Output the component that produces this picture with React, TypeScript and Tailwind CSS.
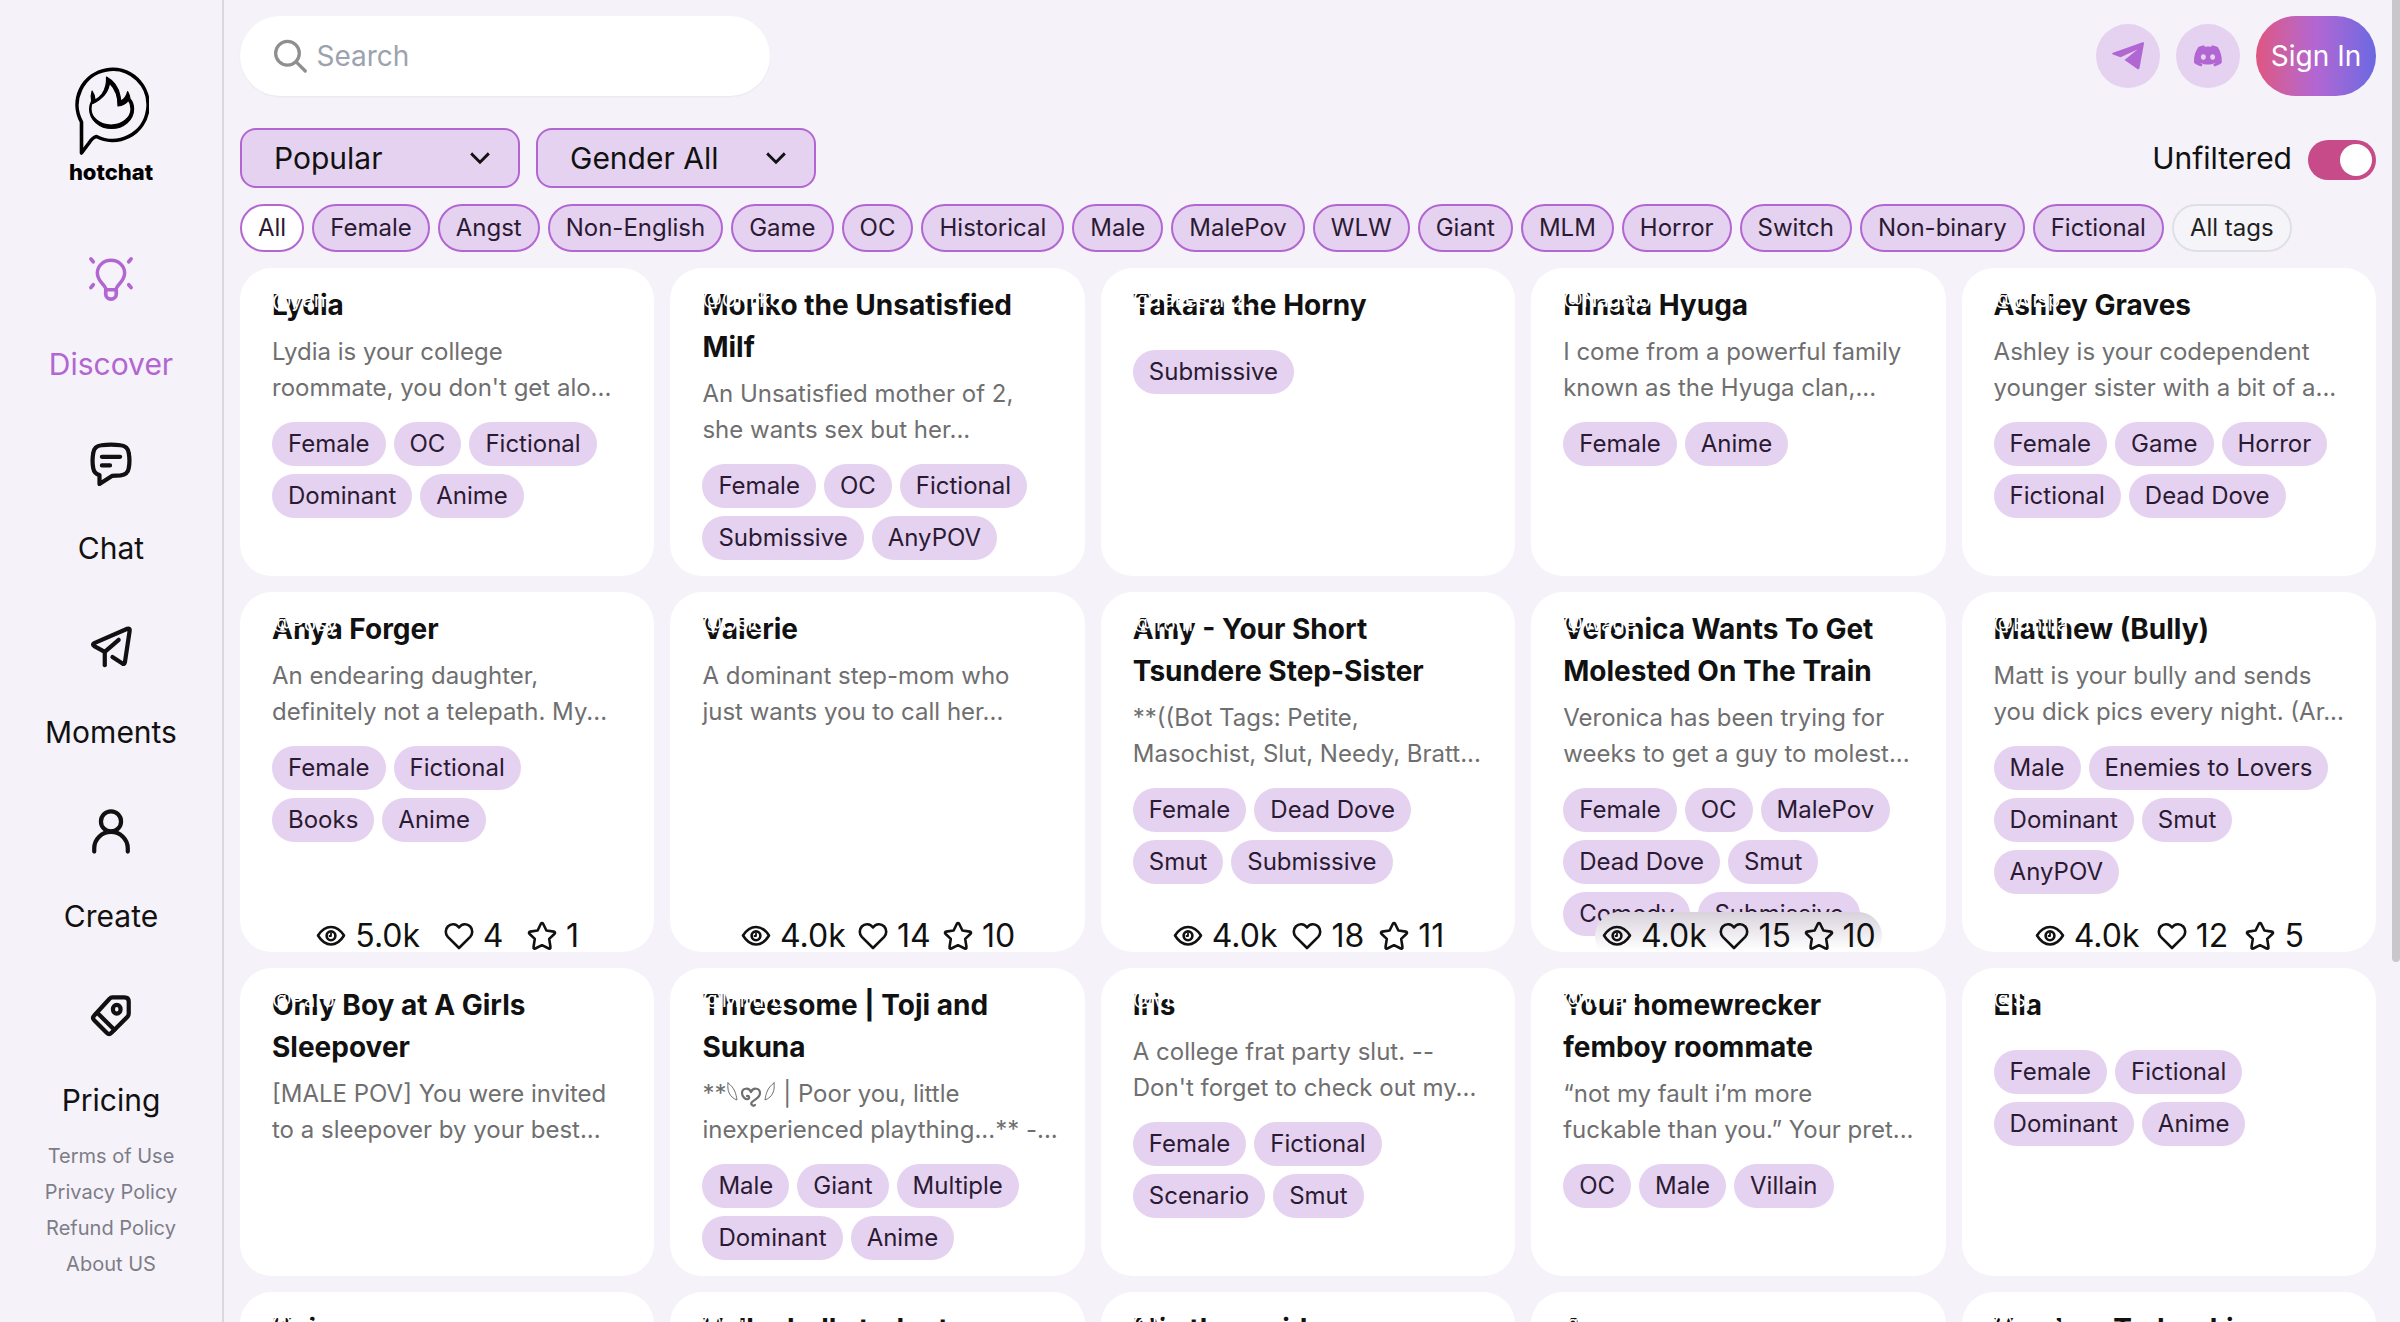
import React from "react";

type IconProps = { className?: string };

const stroke = {
  fill: "none",
  stroke: "currentColor",
  strokeLinecap: "round" as const,
  strokeLinejoin: "round" as const,
};

const Bulb = ({ className }: IconProps) => (
  <svg viewBox="0 0 48 48" className={className} {...stroke} strokeWidth={3.8} aria-hidden="true">
    <path d="M18.5 35c0-5.200-9.500-8.500-9.500-18a15 13.500 0 0 1 30 0c0 9.500-9.500 12.800-9.500 18z" transform="translate(1.200 1) scale(.95 .98)" />
    <path d="M18.500 35.500v4.500a5.500 5 0 0 0 11 0v-4.500" />
    <path d="M3 3l2.500 3M45 3l-2.500 3M3 33l2.500-3M45 33l-2.500-3" />
  </svg>
);
const Chat = ({ className }: IconProps) => (
  <svg viewBox="0 0 48 48" className={className} {...stroke} strokeWidth={4.4} aria-hidden="true">
    <path d="M14 5.500Q24 4 34 5.500q7.500.8 8.500 8Q44 22 42.500 29.500q-1 6.500-8.500 7.500l-9 .5-13 8.500v-9.500Q6.500 35 5.500 29.500 4 22 5.500 13.500q1-7.200 8.500-8z" />
    <path d="M14.500 17.500h19M14.500 26.500h8.500" />
  </svg>
);
const Plane = ({ className }: IconProps) => (
  <svg viewBox="0 0 48 48" className={className} {...stroke} strokeWidth={4.4} aria-hidden="true">
    <path d="M32 16.500L17.500 29 6.500 23Q4 21.300 6.500 20L41 5q3-1 2.500 2L38.500 40q-.5 2.500-2.500 1.300L25.500 34.500" />
    <path d="M17.500 29v14" />
  </svg>
);
const Person = ({ className }: IconProps) => (
  <svg viewBox="0 0 48 48" className={className} {...stroke} strokeWidth={4.4} aria-hidden="true">
    <circle cx="24" cy="14" r="10.500" />
    <path d="M6.500 45.500V42a17.500 17 0 0 1 35 0v3.500" />
  </svg>
);
const Tag = ({ className }: IconProps) => (
  <svg viewBox="0 0 48 48" className={className} {...stroke} strokeWidth={4.4} aria-hidden="true">
    <path d="M25.500 5.500H38q4.500 0 4.500 4.500v12.500q0 2-1.500 3.500L24.500 42.500q-2.500 2.500-5 0L6.500 29.500q-2.500-2.500 0-5L22.500 7q1.200-1.500 3-1.500z" />
    <path d="M11.500 23.500L27.500 39.500" />
    <ellipse cx="30" cy="18" rx="4" ry="4.500" />
  </svg>
);
const Eye = () => (
  <svg viewBox="0 0 32 32" className="size-8" {...stroke} strokeWidth={2.600} aria-hidden="true">
    <path d="M3 15.500Q8.500 7 16 7T29 15.500Q23.500 24.500 16 24.500T3 15.500z" />
    <circle cx="16" cy="15.800" r="4.400" />
    <path d="M16 13.500v2.500h-1.500" strokeWidth={1.800} />
  </svg>
);
const Heart = () => (
  <svg viewBox="0 0 32 32" className="size-8" {...stroke} strokeWidth={2.600} aria-hidden="true">
    <path d="M16 28L4.800 16.800a7.600 7.600 0 0 1 0-10.300C8 3.200 13 3.500 16 7.500c3-4 8-4.300 11.200-1a7.600 7.600 0 0 1 0 10.300z" />
  </svg>
);
const Star = () => (
  <svg viewBox="0 0 32 32" className="size-8" {...stroke} strokeWidth={2.600} aria-hidden="true">
    <path d="M14.900 3.700a1.300 1.300 0 0 1 2.200 0l3.300 6.800 7.500 1.100a1.200 1.200 0 0 1 .7 2.100l-5.400 5.200 1.300 8.300a1.200 1.200 0 0 1-1.800 1.300L16 25.200l-6.700 3.300a1.200 1.200 0 0 1-1.800-1.300l1.300-8.300-5.400-5.200a1.200 1.200 0 0 1 .7-2.100l7.500-1.100z" />
  </svg>
);
const Chevron = () => (
  <svg viewBox="0 0 20 20" className="pointer-events-none absolute top-1/2 right-7 size-6 -translate-y-1/2" {...stroke} strokeWidth={2.400} strokeLinecap="square" strokeLinejoin="miter" aria-hidden="true">
    <path d="M3.500 7l6.500 6.500L16.500 7" />
  </svg>
);
const WingedHeart = () => (
  <svg viewBox="0 0 50 28" className="inline-block h-7 w-[50px] align-middle" {...stroke} strokeWidth={1.500} aria-hidden="true">
    <path d="M2 2c-1 7 1 14 9 17-1-6-2-12-9-17zM48 2c1 7-1 14-9 17 1-6 2-12 9-17z" strokeWidth={1} />
    <path d="M25 11c-2-5-9-4-9 1 0 4 4 7 6 6s1-4-1-3M25 11c2-5 9-4 9 1 0 5-5 6-8 9-2 2 1 5 3 3" strokeWidth={2.200} />
  </svg>
);

const Logo = () => (
  <a href="#home" className="flex flex-col items-center text-black">
    <svg viewBox="0 0 76 92" className="h-[92px] w-[76px]" {...stroke} aria-hidden="true">
      <path d="M8.500 56A35.500 35.500 0 1 1 23.500 70.500Q20 71 16 77L8.500 87z" strokeWidth={3.600} />
      <path
        d="M33.500 11C41 15 45.500 22 47 30q.4 3 .8 5 5.500-3 6.800-9.500 2 3.500 2.500 7.500 3.500 4 3.500 10a22 19.500 0 0 1-44 0q0-4 2-8-1-5 .5-10 2.500 3.500 3 9 8.500-4 10.900-15 .7-4 .5-8zM36.500 17q-1.500 13-16.500 20.500l-.8-1q-1.200 3-1.200 6.500a20 16 0 0 0 40 0q0-5-2.500-8.500-4 5-10.500 5.500.5-14-8.500-23z"
        fill="currentColor"
        strokeWidth={1.200}
        fillRule="evenodd"
      />
    </svg>
    <span className="mt-0.5 text-[22px] leading-6 font-extrabold">hotchat</span>
  </a>
);

const nav = [
  { label: "Discover", Icon: Bulb, active: true },
  { label: "Chat", Icon: Chat },
  { label: "Moments", Icon: Plane },
  { label: "Create", Icon: Person },
  { label: "Pricing", Icon: Tag },
];

const filters = ["Female", "Angst", "Non-English", "Game", "OC", "Historical", "Male", "MalePov", "WLW", "Giant", "MLM", "Horror", "Switch", "Non-binary", "Fictional"];

type Card = {
  title: string[];
  author: string;
  lines?: React.ReactNode[];
  tags: string[];
  stats?: [string, string, string];
};

const cards: Card[] = [
  { title: ["Lydia"], author: "@yan", lines: ["Lydia is your college", "roommate, you don't get alo..."], tags: ["Female", "OC", "Fictional", "Dominant", "Anime"] },
  { title: ["Moriko the Unsatisfied", "Milf"], author: "@Omiko", lines: ["An Unsatisfied mother of 2,", "she wants sex but her..."], tags: ["Female", "OC", "Fictional", "Submissive", "AnyPOV"] },
  { title: ["Takara the Horny"], author: "@Takeshi12...", tags: ["Submissive"] },
  { title: ["Hinata Hyuga"], author: "@Nagato", lines: ["I come from a powerful family", "known as the Hyuga clan,..."], tags: ["Female", "Anime"] },
  { title: ["Ashley Graves"], author: "@Wisp", lines: ["Ashley is your codependent", "younger sister with a bit of a..."], tags: ["Female", "Game", "Horror", "Fictional", "Dead Dove"] },
  { title: ["Anya Forger"], author: "@Posy", lines: ["An endearing daughter,", "definitely not a telepath. My..."], tags: ["Female", "Fictional", "Books", "Anime"], stats: ["5.0k", "4", "1"] },
  { title: ["Valerie"], author: "@Oslo", lines: ["A dominant step-mom who", "just wants you to call her..."], tags: [], stats: ["4.0k", "14", "10"] },
  { title: ["Amy - Your Short", "Tsundere Step-Sister"], author: "@Tom", lines: ["**((Bot Tags: Petite,", "Masochist, Slut, Needy, Bratt..."], tags: ["Female", "Dead Dove", "Smut", "Submissive"], stats: ["4.0k", "18", "11"] },
  { title: ["Veronica Wants To Get", "Molested On The Train"], author: "@Wage", lines: ["Veronica has been trying for", "weeks to get a guy to molest..."], tags: ["Female", "OC", "MalePov", "Dead Dove", "Smut", "Comedy", "Submissive"], stats: ["4.0k", "15", "10"] },
  { title: ["Matthew (Bully)"], author: "@Emilia", lines: ["Matt is your bully and sends", "you dick pics every night. (Ar..."], tags: ["Male", "Enemies to Lovers", "Dominant", "Smut", "AnyPOV"], stats: ["4.0k", "12", "5"] },
  { title: ["Only Boy at A Girls", "Sleepover"], author: "@Parot", lines: ["[MALE POV] You were invited", "to a sleepover by your best..."], tags: [] },
  { title: ["Threesome | Toji and", "Sukuna"], author: "@Miruru", lines: [<>**<WingedHeart /> | Poor you, little</>, "inexperienced plaything...** -..."], tags: ["Male", "Giant", "Multiple", "Dominant", "Anime"] },
  { title: ["Iris"], author: "@Vi", lines: ["A college frat party slut. --", "Don't forget to check out my..."], tags: ["Female", "Fictional", "Scenario", "Smut"] },
  { title: ["Your homewrecker", "femboy roommate"], author: "@Wyatt", lines: ["“not my fault i’m more", "fuckable than you.” Your pret..."], tags: ["OC", "Male", "Villain"] },
  { title: ["Ella"], author: "@Sj", tags: ["Female", "Fictional", "Dominant", "Anime"] },
  { title: ["Kai"], author: "@Ro", tags: [] },
  { title: ["Volleyball student"], author: "@Mi", tags: [] },
  { title: ["Mia the maid"], author: "@Mi", tags: [] },
  { title: ["Amara"], author: "@Ame", tags: [] },
  { title: ["Yandere Todoroki"], author: "@Yuno", tags: [] },
];

const CharacterCard = ({ card }: { card: Card }) => (
  <article className="relative flex min-h-[308px] flex-col overflow-hidden rounded-[32px] bg-white px-8 py-4">
    <h2 className="text-[28px] leading-[42px] font-bold whitespace-nowrap text-[#111]">
      {card.title.map((t) => (
        <span key={t} className="block">{t}</span>
      ))}
    </h2>
    <span aria-hidden="true" className="absolute top-4 left-8 text-xl leading-8 text-white">{card.author}</span>
    <p className="mt-2 text-2xl leading-9 whitespace-nowrap text-[#6f6f70]">
      {card.lines?.map((l, i) => (
        <span key={i} className="block h-9">{l}</span>
      ))}
    </p>
    <ul className="mt-4 flex flex-wrap gap-2">
      {card.tags.map((t) => (
        <li key={t} className="rounded-full bg-[#e5d2f0] px-4 text-2xl leading-[44px] text-[#2b1a33]">{t}</li>
      ))}
    </ul>
    {card.stats && (
      <div className={`absolute inset-x-16 -bottom-2 flex h-12 items-center justify-around rounded-full text-[32px] leading-10 text-[#111] ${card.tags.length > 6 ? "bg-linear-to-b from-[#d9d2dc] to-white to-80%" : ""}`}>
        <span className="flex items-center"><Eye /><span className="pl-2">{card.stats[0]}</span></span>
        <span className="flex items-center"><Heart /><span className="pl-2">{card.stats[1]}</span></span>
        <span className="flex items-center"><Star /><span className="pl-2">{card.stats[2]}</span></span>
      </div>
    )}
  </article>
);

const Dropdown = ({ label, options }: { label: string; options: string[] }) => (
  <div className="relative w-[280px]">
    <select aria-label={label} className="h-[60px] w-full appearance-none rounded-2xl border-2 border-[#b266d2] bg-[#e5d2f0] px-8 text-[30px] leading-9 text-[#111]">
      {options.map((o) => (
        <option key={o}>{o}</option>
      ))}
    </select>
    <Chevron />
  </div>
);

export default function App() {
  return (
    <div className="flex h-screen overflow-hidden bg-[#f5f2f9] font-[Inter,sans-serif] text-[#111]">
      <aside className="flex w-56 shrink-0 flex-col items-center border-r-2 border-[#dad8df] pt-[66px]">
        <Logo />
        <nav className="mt-[72px] flex flex-col items-center gap-14">
          {nav.map(({ label, Icon, active }) => (
            <a key={label} href={`#${label.toLowerCase()}`} className={active ? "flex h-32 flex-col items-center justify-between text-[#b266d2]" : "flex h-32 flex-col items-center justify-between"}>
              <Icon className="size-[46px]" />
              <span className="text-[30px] leading-10">{label}</span>
            </a>
          ))}
        </nav>
        <div className="mt-[18px] flex flex-col items-center text-xl leading-9 text-[#7d7d88]">
          <a href="#terms">Terms of Use</a>
          <a href="#privacy">Privacy Policy</a>
          <a href="#refund">Refund Policy</a>
          <a href="#about">About US</a>
        </div>
      </aside>

      <main className="min-w-0 flex-1 pt-4 pr-4 pl-4">
        <header className="flex items-center justify-between">
          <label className="flex h-20 w-[530px] items-center gap-2 rounded-full bg-white pl-8 shadow-xs">
            <svg viewBox="0 0 40 40" className="size-10 text-[#8f8f8f]" {...stroke} strokeWidth={3.600} aria-hidden="true">
              <circle cx="17" cy="17" r="13" />
              <path d="M26.500 26.500l10 10" />
            </svg>
            <input aria-label="Search" placeholder="Search" className="w-full bg-transparent text-[28px] leading-9 outline-none placeholder:text-[#9ca3af]" />
          </label>
          <div className="flex items-center gap-4">
            <button aria-label="Telegram" className="flex size-16 items-center justify-center rounded-full bg-[#e5d2f0] text-[#b266d2]">
              <svg viewBox="0 0 32 28" className="h-7 w-8" fill="currentColor" aria-hidden="true">
                <path d="M30.500.3Q32.200-.2 32 1.500L27.500 26q-.5 2.200-2.500.8L12.500 18 25.500 7.500 8.500 15.300 1 12.500q-1.800-.9 0-1.800z" />
              </svg>
            </button>
            <button aria-label="Discord" className="flex size-16 items-center justify-center rounded-full bg-[#e5d2f0] text-[#b266d2]">
              <svg viewBox="0 0 24 24" className="size-7" fill="currentColor" aria-hidden="true">
                <path d="M20.317 4.370a19.800 19.800 0 0 0-4.885-1.515c-.21.375-.444.864-.608 1.250a18.270 18.270 0 0 0-5.648 0c-.164-.386-.398-.875-.608-1.250A19.700 19.700 0 0 0 3.683 4.370C.533 9.046-.32 13.580.1 18.058a19.900 19.900 0 0 0 6.050 3.030c.462-.63.874-1.295 1.226-1.994a13 13 0 0 1-1.872-.892l.372-.292c3.928 1.793 8.180 1.793 12.062 0l.373.292c-.598.35-1.220.645-1.873.892.36.698.772 1.362 1.225 1.993a19.800 19.800 0 0 0 6.052-3.030c.5-5.177-.838-9.674-3.398-13.687zM8.020 15.330c-1.183 0-2.157-1.085-2.157-2.419s.955-2.419 2.157-2.419c1.210 0 2.176 1.096 2.157 2.420 0 1.333-.956 2.418-2.157 2.418zm7.975 0c-1.183 0-2.157-1.085-2.157-2.419s.955-2.419 2.157-2.419c1.210 0 2.176 1.096 2.157 2.420 0 1.333-.946 2.418-2.157 2.418z" />
              </svg>
            </button>
            <button className="h-20 w-[120px] rounded-full bg-linear-to-r from-[#df5580] via-[#b266d2] to-[#6a68e2] text-center text-[28px] leading-9 whitespace-nowrap text-white">Sign In</button>
          </div>
        </header>

        <section className="mt-8 flex items-center justify-between">
          <div className="flex gap-4">
            <Dropdown label="Sort" options={["Popular", "Newest"]} />
            <Dropdown label="Gender" options={["Gender All", "Female", "Male"]} />
          </div>
          <label className="relative flex items-center gap-4 text-[30px] leading-9">
            Unfiltered
            <input type="checkbox" defaultChecked className="peer sr-only" />
            <span className="mt-1 flex h-10 w-[68px] items-center justify-end rounded-full bg-[#c74b88] px-1">
              <span className="size-8 rounded-full bg-white" />
            </span>
          </label>
        </section>

        <section aria-label="Tags" className="mt-4 flex gap-2 text-2xl leading-[44px] whitespace-nowrap text-[#2b1a33]">
          <button className="rounded-full border-2 border-[#b266d2] bg-white px-4">All</button>
          {filters.map((f) => (
            <button key={f} className="rounded-full border-2 border-[#b266d2] bg-[#e5d2f0] px-4">{f}</button>
          ))}
          <button className="rounded-full border-2 border-[#dfe0e6] bg-[#f5f5f9] px-4 text-[#222]">All tags</button>
        </section>

        <section aria-label="Characters" className="mt-4 grid grid-cols-5 gap-4">
          {cards.map((c) => (
            <CharacterCard key={c.title[0]} card={c} />
          ))}
        </section>
      </main>
      <div aria-hidden="true" className="h-[962px] w-2 shrink-0 rounded-b-full bg-[#c9c7cc]" />
    </div>
  );
}
